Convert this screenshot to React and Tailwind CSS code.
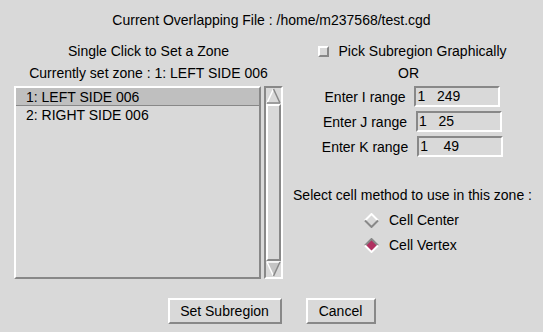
import React from "react";

const bevelOut = "border-2 border-t-white border-l-white border-b-[#888888] border-r-[#888888]";
const bevelIn = "border-2 border-t-[#888888] border-l-[#888888] border-b-white border-r-white";

function Diamond({ selected }) {
  const light = "#ffffff";
  const dark = "#888888";
  const top = selected ? dark : light;
  const bottom = selected ? light : dark;
  return (
    <svg width="15" height="15" viewBox="0 0 15 15" className="shrink-0">
      <polygon points="7.5,1 14,7.5 7.5,14 1,7.5" fill={selected ? "#b03060" : "#d9d9d9"} />
      <polyline points="1,7.5 7.5,1 14,7.5" fill="none" stroke={top} strokeWidth="2" />
      <polyline points="1,7.5 7.5,14 14,7.5" fill="none" stroke={bottom} strokeWidth="2" />
    </svg>
  );
}

function RangeRow({ label, value }) {
  return (
    <div className="flex items-center h-[21px] gap-[9px]">
      <span>{label}</span>
      <div className={`w-[86px] h-[21px] ${bevelIn} pl-[1px] leading-[16px] whitespace-pre bg-[#d9d9d9]`}>{value}</div>
    </div>
  );
}

export default function App() {
  return (
    <div
      className="w-[543px] h-[332px] bg-[#d9d9d9] text-black text-[14px] leading-[16px] flex flex-col overflow-hidden"
      style={{ fontFamily: '"Liberation Sans", Arial, sans-serif' }}
    >
      <div className="pt-[12px] text-center h-[28px]">Current Overlapping File : /home/m237568/test.cgd</div>

      <div className="flex mt-[15px]">
        {/* Left column */}
        <div className="w-[283px] pl-[14px] flex flex-col">
          <div className="text-center">Single Click to Set a Zone</div>
          <div className="text-center mt-[6px]">Currently set zone : 1: LEFT SIDE 006</div>
          <div className="flex mt-[5px] gap-[3px]">
            <div className={`w-[247px] h-[193px] ${bevelOut} flex flex-col`}>
              <div className="h-[18px] bg-[#bfbfbf] border-b border-b-[#888888] pl-[10px] pt-[1px] leading-[16px]">1: LEFT SIDE 006</div>
              <div className="h-[18px] pl-[10px] pt-[1px] leading-[16px]">2: RIGHT SIDE 006</div>
            </div>
            <div className={`w-[19px] h-[193px] ${bevelIn} flex flex-col`}>
              <svg width="15" height="16" viewBox="0 0 15 16" className="shrink-0">
                <polygon points="7.5,1 14,15 1,15" fill="#d9d9d9" />
                <line x1="1" y1="15" x2="7.5" y2="1" stroke="#ffffff" strokeWidth="1.5" />
                <line x1="7.5" y1="1" x2="14" y2="15" stroke="#888888" strokeWidth="1.5" />
                <line x1="1" y1="15" x2="14" y2="15" stroke="#888888" strokeWidth="1.5" />
              </svg>
              <div className={`flex-1 ${bevelOut}`}></div>
              <svg width="15" height="16" viewBox="0 0 15 16" className="shrink-0">
                <polygon points="1,1 14,1 7.5,15" fill="#c4c4c4" />
                <line x1="1" y1="1" x2="14" y2="1" stroke="#ffffff" strokeWidth="1.5" />
                <line x1="1" y1="1" x2="7.5" y2="15" stroke="#ffffff" strokeWidth="1.5" />
                <line x1="14" y1="1" x2="7.5" y2="15" stroke="#888888" strokeWidth="1.5" />
              </svg>
            </div>
          </div>
        </div>

        {/* Right column */}
        <div className="ml-[7px] w-[245px] flex flex-col items-center">
          <div className="flex items-center gap-[9px]">
            <div className={`w-[11px] h-[11px] ${bevelOut} bg-[#d9d9d9]`}></div>
            <span>Pick Subregion Graphically</span>
          </div>
          <div className="mt-[6px] -translate-x-[4px]">OR</div>
          <div className="mt-[5px] flex flex-col items-center gap-[4px]">
            <RangeRow label="Enter I range" value="1   249" />
            <RangeRow label="Enter J range" value="1   25" />
            <RangeRow label="Enter K range" value="1    49" />
          </div>
          <div className="mt-[30px]">Select cell method to use in this zone :</div>
          <div className="mt-[9px] flex flex-col gap-[9px] -translate-x-[1px]">
            <div className="flex items-center gap-[10px]">
              <Diamond selected={false} />
              <span>Cell Center</span>
            </div>
            <div className="flex items-center gap-[10px]">
              <Diamond selected={true} />
              <span>Cell Vertex</span>
            </div>
          </div>
        </div>
      </div>

      <div className="flex justify-center gap-[24px] mt-[19px]">
        <div className={`w-[114px] h-[26px] ${bevelOut} flex items-center justify-center`}>Set Subregion</div>
        <div className={`w-[70px] h-[26px] ${bevelOut} flex items-center justify-center`}>Cancel</div>
      </div>
    </div>
  );
}
